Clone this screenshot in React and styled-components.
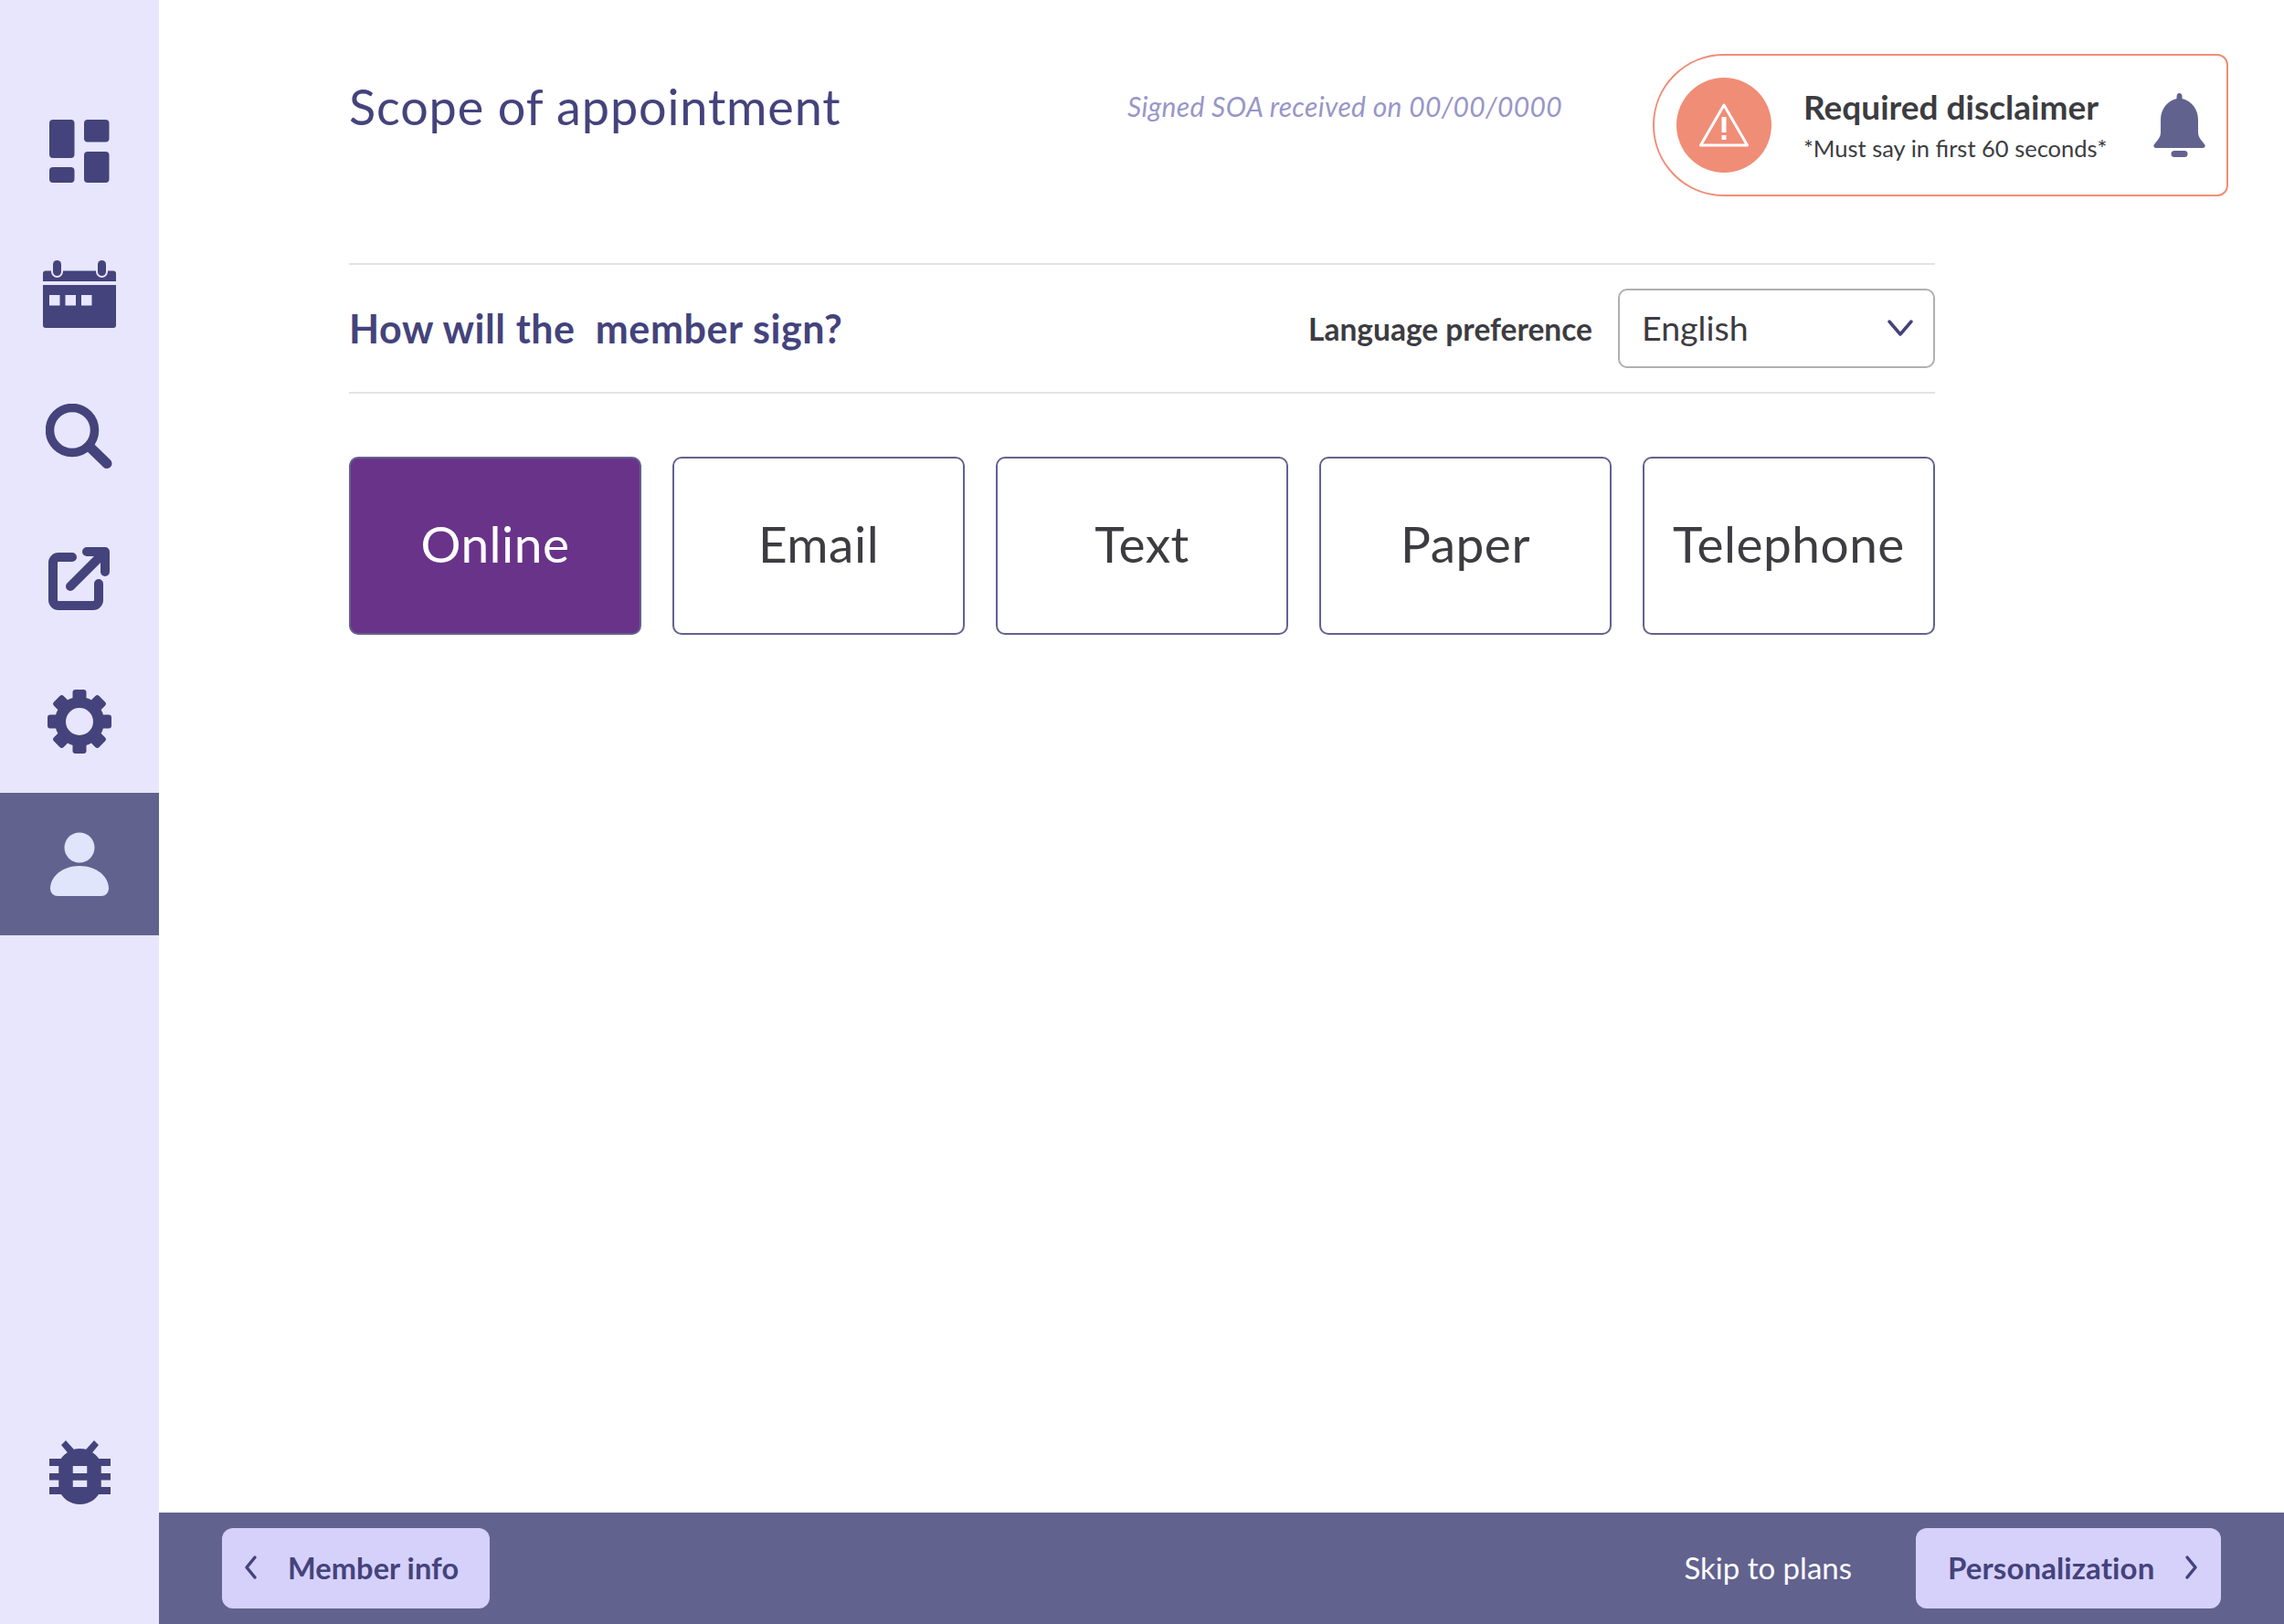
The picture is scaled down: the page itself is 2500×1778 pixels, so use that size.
import React from "react";
import styled, { createGlobalStyle } from "styled-components";

const Global = createGlobalStyle`
  html, body { margin: 0; padding: 0; background: #fff; }
  body { font-family: Lato, "Open Sans", sans-serif; color: #3c3c41; }
  * { box-sizing: border-box; }
`;

const Page = styled.div`
  display: flex;
  width: 2500px;
  height: 1778px;
  overflow: hidden;
`;
const Sidebar = styled.nav`
  width: 174px;
  flex: none;
  background: #e8e6fd;
  display: flex;
  flex-direction: column;
  padding-top: 88px;
  padding-bottom: 88px;
`;
const NavItem = styled.div`
  height: 156px;
  display: flex;
  align-items: center;
  justify-content: center;
  background: ${(p) => (p.$active ? "#62628f" : "transparent")};
  color: ${(p) => (p.$active ? "#e0e5fc" : "#44437c")};
  ${(p) => p.$bottom && "margin-top: auto;"}
`;
const Main = styled.div`
  flex: 1;
  min-width: 0;
  display: flex;
  flex-direction: column;
`;
const Content = styled.main`
  flex: 1;
  padding: 59px 61px 0 208px;
`;
const Header = styled.header`
  display: flex;
  align-items: flex-start;
  height: 156px;
`;
const Title = styled.h1`
  margin: 24px 0 0;
  font-size: 54px;
  letter-spacing: 0.85px;
  line-height: 68px;
  font-weight: 400;
  color: #44437c;
  flex: 1;
`;
const Signed = styled.div`
  margin: 38px 99px 0 0;
  font-size: 30px;
  letter-spacing: 0.35px;
  line-height: 38px;
  font-style: italic;
  color: #9896c8;
`;
const Alert = styled.aside`
  width: 630px;
  height: 156px;
  flex: none;
  border: 2px solid #f08d76;
  border-radius: 78px 12px 12px 78px;
  display: flex;
  align-items: center;
  padding: 0 23px 0 24px;
`;
const AlertCircle = styled.div`
  width: 104px;
  height: 104px;
  border-radius: 50%;
  background: #f08d76;
  flex: none;
  display: flex;
  align-items: center;
  justify-content: center;
`;
const AlertText = styled.div`
  flex: 1;
  margin-left: 35px;
`;
const AlertTitle = styled.div`
  font-size: 37px;
  line-height: 44px;
  font-weight: 700;
  color: #3c3c41;
`;
const AlertSub = styled.div`
  font-size: 25.5px;
  line-height: 34px;
  margin-top: 6px;
  color: #3c3c41;
`;
const Section = styled.section`
  width: 1736px;
  margin-top: 73px;
`;
const QuestionRow = styled.div`
  height: 143px;
  border-top: 2px solid #e3e3e3;
  border-bottom: 2px solid #e3e3e3;
  display: flex;
  align-items: center;
`;
const Question = styled.h2`
  margin: 0;
  flex: 1;
  font-size: 43px;
  letter-spacing: 0.6px;
  font-weight: 700;
  color: #44437c;
  white-space: pre;
`;
const LangLabel = styled.label`
  font-size: 33.5px;
  font-weight: 700;
  color: #3c3c41;
  margin-right: 28px;
`;
const Select = styled.div`
  width: 347px;
  height: 87px;
  border: 2px solid #b0b0b0;
  border-radius: 10px;
  display: flex;
  align-items: center;
  justify-content: space-between;
  padding: 0 22px 2px 24px;
  font-size: 37.5px;
  color: #3c3c41;
`;
const Cards = styled.div`
  display: grid;
  grid-template-columns: repeat(5, 320px);
  gap: 34px;
  margin-top: 69px;
`;
const Card = styled.button`
  height: 195px;
  padding: 0 0 5px;
  border: 2px solid #62628f;
  border-radius: 10px;
  background: ${(p) => (p.$selected ? "#693389" : "#fff")};
  color: ${(p) => (p.$selected ? "#fff" : "#3c3c41")};
  font-family: inherit;
  font-size: 55px;
  letter-spacing: 0.5px;
`;
const Footer = styled.footer`
  height: 122px;
  flex: none;
  background: #62628f;
  display: flex;
  align-items: center;
  justify-content: space-between;
  padding: 0 69px;
`;
const FooterRight = styled.div`
  display: flex;
  align-items: center;
  gap: 70px;
`;
const NavButton = styled.button`
  height: 88px;
  width: ${(p) => p.$width}px;
  border: none;
  border-radius: 12px;
  background: #d6d1fa;
  color: #44437c;
  font-family: inherit;
  font-size: ${(p) => p.$size}px;
  font-weight: 700;
  letter-spacing: 0.1px;
  display: flex;
  align-items: center;
  gap: ${(p) => p.$gap}px;
  padding: ${(p) => p.$pad};
`;
const SkipLink = styled.a`
  font-size: 33px;
  padding-bottom: 2px;
  color: #fff;
`;

const DashboardIcon = () => (
  <svg width="66" height="70" viewBox="54 130 66 70" fill="currentColor">
    <rect x="54" y="130" width="27.5" height="42" rx="4" />
    <rect x="54" y="182" width="27.5" height="17" rx="4" />
    <rect x="92" y="130" width="27.5" height="24.5" rx="4" />
    <rect x="92" y="165" width="27.5" height="34" rx="4" />
  </svg>
);
const CalendarIcon = () => (
  <svg width="80" height="74" viewBox="47 284 80 74" fill="currentColor">
    <path d="M50 295.5h74a3 3 0 0 1 3 3V307H47v-8.5a3 3 0 0 1 3-3Z" />
    <path d="M47 311h80v44a3 3 0 0 1-3 3H50a3 3 0 0 1-3-3Z" />
    <rect x="56" y="281" width="13" height="22" rx="6.5" fill="#e8e6fd" />
    <rect x="105" y="281" width="13" height="22" rx="6.5" fill="#e8e6fd" />
    <rect x="58" y="284" width="9" height="17" rx="4.5" />
    <rect x="107" y="284" width="9" height="17" rx="4.5" />
    <rect x="54" y="322" width="11.5" height="11.5" fill="#e8e6fd" />
    <rect x="71.5" y="322" width="11.5" height="11.5" fill="#e8e6fd" />
    <rect x="89" y="322" width="11.5" height="11.5" fill="#e8e6fd" />
  </svg>
);
const SearchIcon = () => (
  <svg width="74" height="72" viewBox="50 442 74 72" fill="none" stroke="currentColor">
    <circle cx="79" cy="471" r="24.5" strokeWidth="9.5" />
    <path d="M99 490 117 507.5" strokeWidth="11" strokeLinecap="round" />
  </svg>
);
const ExternalIcon = () => (
  <svg width="70" height="70" viewBox="52 599 70 70" fill="none" stroke="currentColor" strokeWidth="10" strokeLinecap="round" strokeLinejoin="round">
    <path d="M79 610H64a6 6 0 0 0-6 6v41a6 6 0 0 0 6 6h38a6 6 0 0 0 6-6V639" />
    <path d="M77 642 113 606" />
    <path d="M95 604h20v22" />
  </svg>
);
const GearIcon = () => (
  <svg width="70" height="70" viewBox="-35 -35 70 70" fill="currentColor">
    <circle r="21" fill="none" stroke="currentColor" strokeWidth="12" />
    {[0, 45, 90, 135, 180, 225, 270, 315].map((a) => (
      <rect key={a} x="-7.5" y="-35" width="15" height="12" rx="3" transform={`rotate(${a})`} />
    ))}
  </svg>
);
const UserIcon = () => (
  <svg width="64" height="70" viewBox="55 911 64 70" fill="currentColor">
    <circle cx="87" cy="928" r="16.5" />
    <path d="M55 973c0-14 14-25 32-25s32 11 32 25a8 8 0 0 1-8 8H63a8 8 0 0 1-8-8Z" />
  </svg>
);
const BugIcon = () => (
  <svg width="67" height="70" viewBox="53.5 1578 67 70" fill="currentColor" fillRule="evenodd">
    <path d="M74 1592 66.500 1583l5-5 9 10ZM100 1592l7.500-9-5-5-9 10Z" />
    <path d="M53.500 1598h67v8h-67ZM53.500 1614h67v7.500h-67ZM53.500 1629h67v8h-67Z" />
    <path d="M87 1587c12 0 20 8 23 15v30c-3 9-12 16-23 16s-20-7-23-16v-30c3-7 11-15 23-15ZM79 1606v8h16v-8ZM79 1621.500v7.500h16v-7.500Z" />
    <path d="M64 1606h15v8H64ZM95 1606h15v8H95ZM64 1621.500h15v7.500H64ZM95 1621.500h15v7.500H95Z" />
  </svg>
);
const WarningIcon = () => (
  <svg width="54" height="48" viewBox="0 0 54 48" fill="none" stroke="#fff" strokeWidth="3" strokeLinejoin="round">
    <path d="M27 2 52.500 46H1.500Z" />
    <rect x="24.500" y="15" width="5" height="17" fill="#fff" stroke="none" />
    <rect x="24.500" y="35" width="5" height="5" fill="#fff" stroke="none" />
  </svg>
);
const BellIcon = () => (
  <svg width="57" height="70" viewBox="0 0 57 70" fill="#62628f">
    <path d="M28.500 0c2 0 3 1.500 3 4v2C42 8.500 49 18 49 29v14c0 3 1 5 3 8l4 5c1.500 2 .500 4-2 4H3c-2.500 0-3.500-2-2-4l4-5c2-3 3-5 3-8V29C8 18 15 8.500 25.500 6V4c0-2.500 1-4 3-4Z" />
    <rect x="19.500" y="63" width="18" height="7" rx="3.500" />
  </svg>
);
const Chevron = ({ dir, color = "#44437c" }) => {
  const d = { left: "M12 3 3 14l9 11", right: "M3 3l9 11L3 25", down: "M2 2l12 14L26 2" }[dir];
  const box = dir === "down" ? [28, 18] : [15, 28];
  return (
    <svg width={box[0]} height={box[1]} viewBox={`0 0 ${box[0]} ${box[1]}`} fill="none" stroke={color} strokeWidth="3.500" strokeLinecap="round" strokeLinejoin="round">
      <path d={d} />
    </svg>
  );
};

export default function App() {
  return (
    <Page>
      <Global />
      <Sidebar>
        <NavItem><DashboardIcon /></NavItem>
        <NavItem><CalendarIcon /></NavItem>
        <NavItem><SearchIcon /></NavItem>
        <NavItem><ExternalIcon /></NavItem>
        <NavItem><GearIcon /></NavItem>
        <NavItem $active><UserIcon /></NavItem>
        <NavItem $bottom><BugIcon /></NavItem>
      </Sidebar>
      <Main>
        <Content>
          <Header>
            <Title>Scope of appointment</Title>
            <Signed>Signed SOA received on 00/00/0000</Signed>
            <Alert>
              <AlertCircle><WarningIcon /></AlertCircle>
              <AlertText>
                <AlertTitle>Required disclaimer</AlertTitle>
                <AlertSub>*Must say in first 60 seconds*</AlertSub>
              </AlertText>
              <BellIcon />
            </Alert>
          </Header>
          <Section>
            <QuestionRow>
              <Question>{"How will the  member sign?"}</Question>
              <LangLabel>Language preference</LangLabel>
              <Select>English<Chevron dir="down" /></Select>
            </QuestionRow>
            <Cards>
              <Card $selected>Online</Card>
              <Card>Email</Card>
              <Card>Text</Card>
              <Card>Paper</Card>
              <Card>Telephone</Card>
            </Cards>
          </Section>
        </Content>
        <Footer>
          <NavButton $width={293} $size={32.5} $gap={33} $pad="0 0 2px 24px"><Chevron dir="left" />Member info</NavButton>
          <FooterRight>
            <SkipLink>Skip to plans</SkipLink>
            <NavButton $width={334} $size={33} $gap={33} $pad="0 0 2px 35px">Personalization<Chevron dir="right" /></NavButton>
          </FooterRight>
        </Footer>
      </Main>
    </Page>
  );
}
